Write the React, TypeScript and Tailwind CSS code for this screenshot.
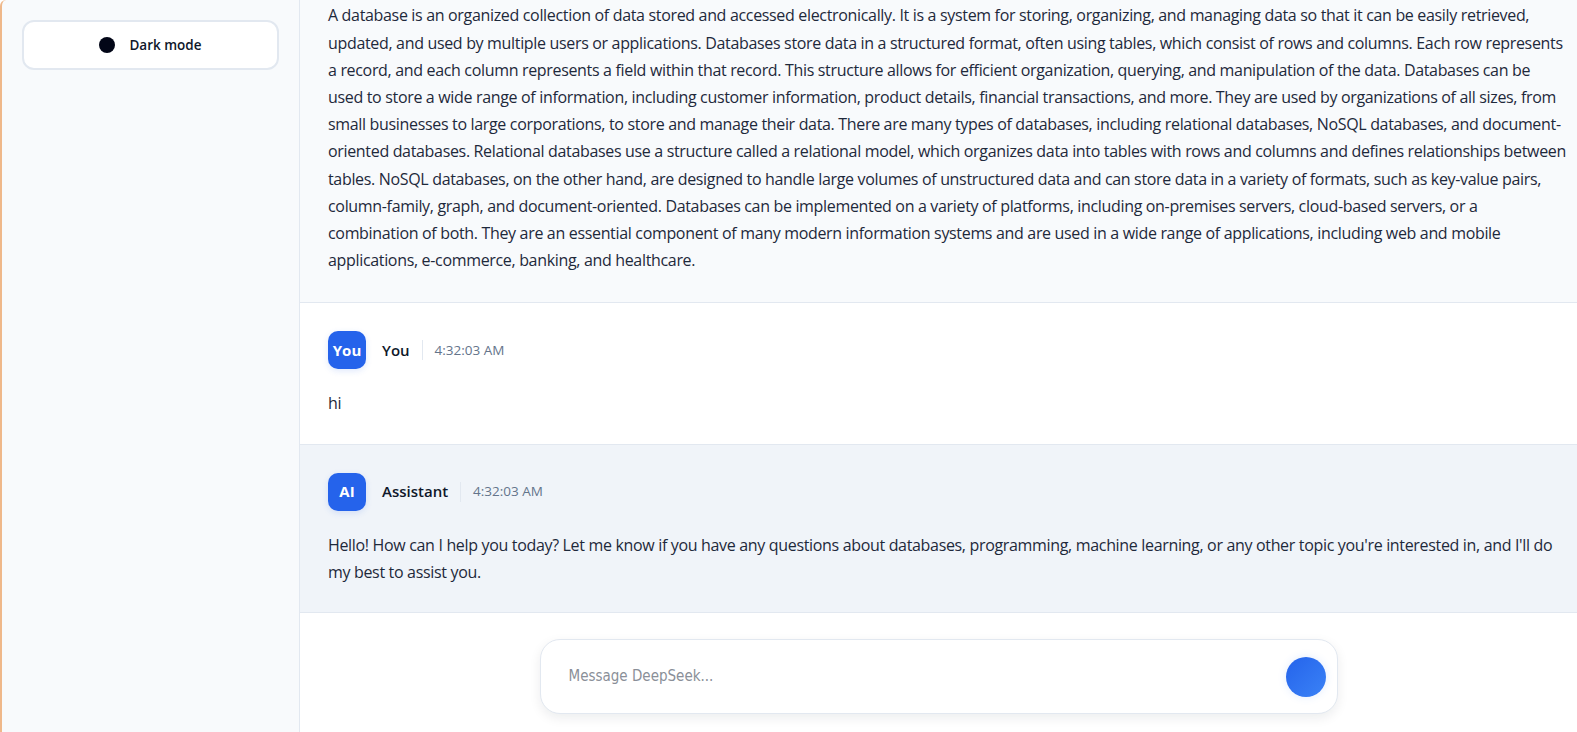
import React from "react";

const dbLines = [
  "A database is an organized collection of data stored and accessed electronically. It is a system for storing, organizing, and managing data so that it can be easily retrieved,",
  "updated, and used by multiple users or applications. Databases store data in a structured format, often using tables, which consist of rows and columns. Each row represents",
  "a record, and each column represents a field within that record. This structure allows for efficient organization, querying, and manipulation of the data. Databases can be",
  "used to store a wide range of information, including customer information, product details, financial transactions, and more. They are used by organizations of all sizes, from",
  "small businesses to large corporations, to store and manage their data. There are many types of databases, including relational databases, NoSQL databases, and document-",
  "oriented databases. Relational databases use a structure called a relational model, which organizes data into tables with rows and columns and defines relationships between",
  "tables. NoSQL databases, on the other hand, are designed to handle large volumes of unstructured data and can store data in a variety of formats, such as key-value pairs,",
  "column-family, graph, and document-oriented. Databases can be implemented on a variety of platforms, including on-premises servers, cloud-based servers, or a",
  "combination of both. They are an essential component of many modern information systems and are used in a wide range of applications, including web and mobile",
  "applications, e-commerce, banking, and healthcare.",
];

const helloLines = [
  "Hello! How can I help you today? Let me know if you have any questions about databases, programming, machine learning, or any other topic you're interested in, and I'll do",
  "my best to assist you.",
];

function Lines({ lines }: { lines: string[] }) {
  return (
    <p className="text-[16px] leading-[27.2px] tracking-[-0.33px] text-[#1e293b]">
      {lines.map((l, i) => (
        <span key={i} className="block whitespace-nowrap">
          {l}
        </span>
      ))}
    </p>
  );
}

function Header({ avatar, name }: { avatar: string; name: string }) {
  return (
    <div className="flex items-center mb-[21px]">
      <div className="w-[38px] h-[38px] rounded-[10px] bg-[#2563eb] text-white flex items-center justify-center text-[15px] font-bold shadow-[0_2px_6px_rgba(37,99,235,0.15)]">
        {avatar}
      </div>
      <span className="ml-4 text-[15px] font-semibold text-[#0f172a]">{name}</span>
      <span className="ml-3 w-px h-[20px] bg-[#e2e8f0]" />
      <span className="ml-3 text-[13.5px] text-[#64748b]">4:32:03 AM</span>
    </div>
  );
}

export default function App() {
  return (
    <div
      className="w-[1577px] h-[732px] flex overflow-hidden bg-white"
      style={{ fontFamily: '"Open Sans", "Noto Sans", sans-serif' }}
    >
      <aside className="w-[300px] shrink-0 h-full bg-[#f8fafc] border-r border-[#e2e8f0] border-l-2 border-l-[#efb88a] rounded-tl-[6px] pl-[20px] pr-[20px] pt-[20px]">
        <button className="w-full h-[50px] bg-white border-2 border-[#e2e8f0] rounded-xl flex items-center justify-center gap-[14px]">
          <span className="w-[16px] h-[16px] rounded-full bg-[#020617]" />
          <span className="text-[13.5px] font-semibold text-[#0f172a]">Dark mode</span>
        </button>
      </aside>
      <main className="flex-1 flex flex-col h-full min-w-0">
        <div className="flex-1 min-h-0 overflow-hidden flex flex-col justify-end">
          <div className="bg-[#f8fafc] border-b border-[#e2e8f0] px-[28px] pt-[28px] pb-[28px]">
            <Lines lines={dbLines} />
          </div>
          <div className="bg-white border-b border-[#e2e8f0] px-[28px] pt-[28px] pb-[26px]">
            <Header avatar="You" name="You" />
            <Lines lines={["hi"]} />
          </div>
          <div className="bg-[#f0f4f9] border-b border-[#e2e8f0] px-[28px] pt-[28px] pb-[26px]">
            <Header avatar="AI" name="Assistant" />
            <Lines lines={helloLines} />
          </div>
        </div>
        <div className="h-[119px] shrink-0 bg-white flex justify-center pt-[26px]">
          <div className="w-[798px] h-[75px] bg-white border border-[#e2e8f0] rounded-[20px] shadow-[0_4px_12px_rgba(15,23,42,0.08)] flex items-center pl-[28px] pr-[11px]">
            <span className="flex-1 text-[15px] text-[#8a8f98]" style={{ fontFamily: '"DejaVu Sans Condensed", "Noto Sans", sans-serif' }}>
              Message DeepSeek...
            </span>
            <span className="w-[40px] h-[40px] rounded-full bg-gradient-to-br from-[#2563eb] to-[#3b82f6] shadow-[0_0_8px_rgba(59,130,246,0.15)]" />
          </div>
        </div>
      </main>
    </div>
  );
}
